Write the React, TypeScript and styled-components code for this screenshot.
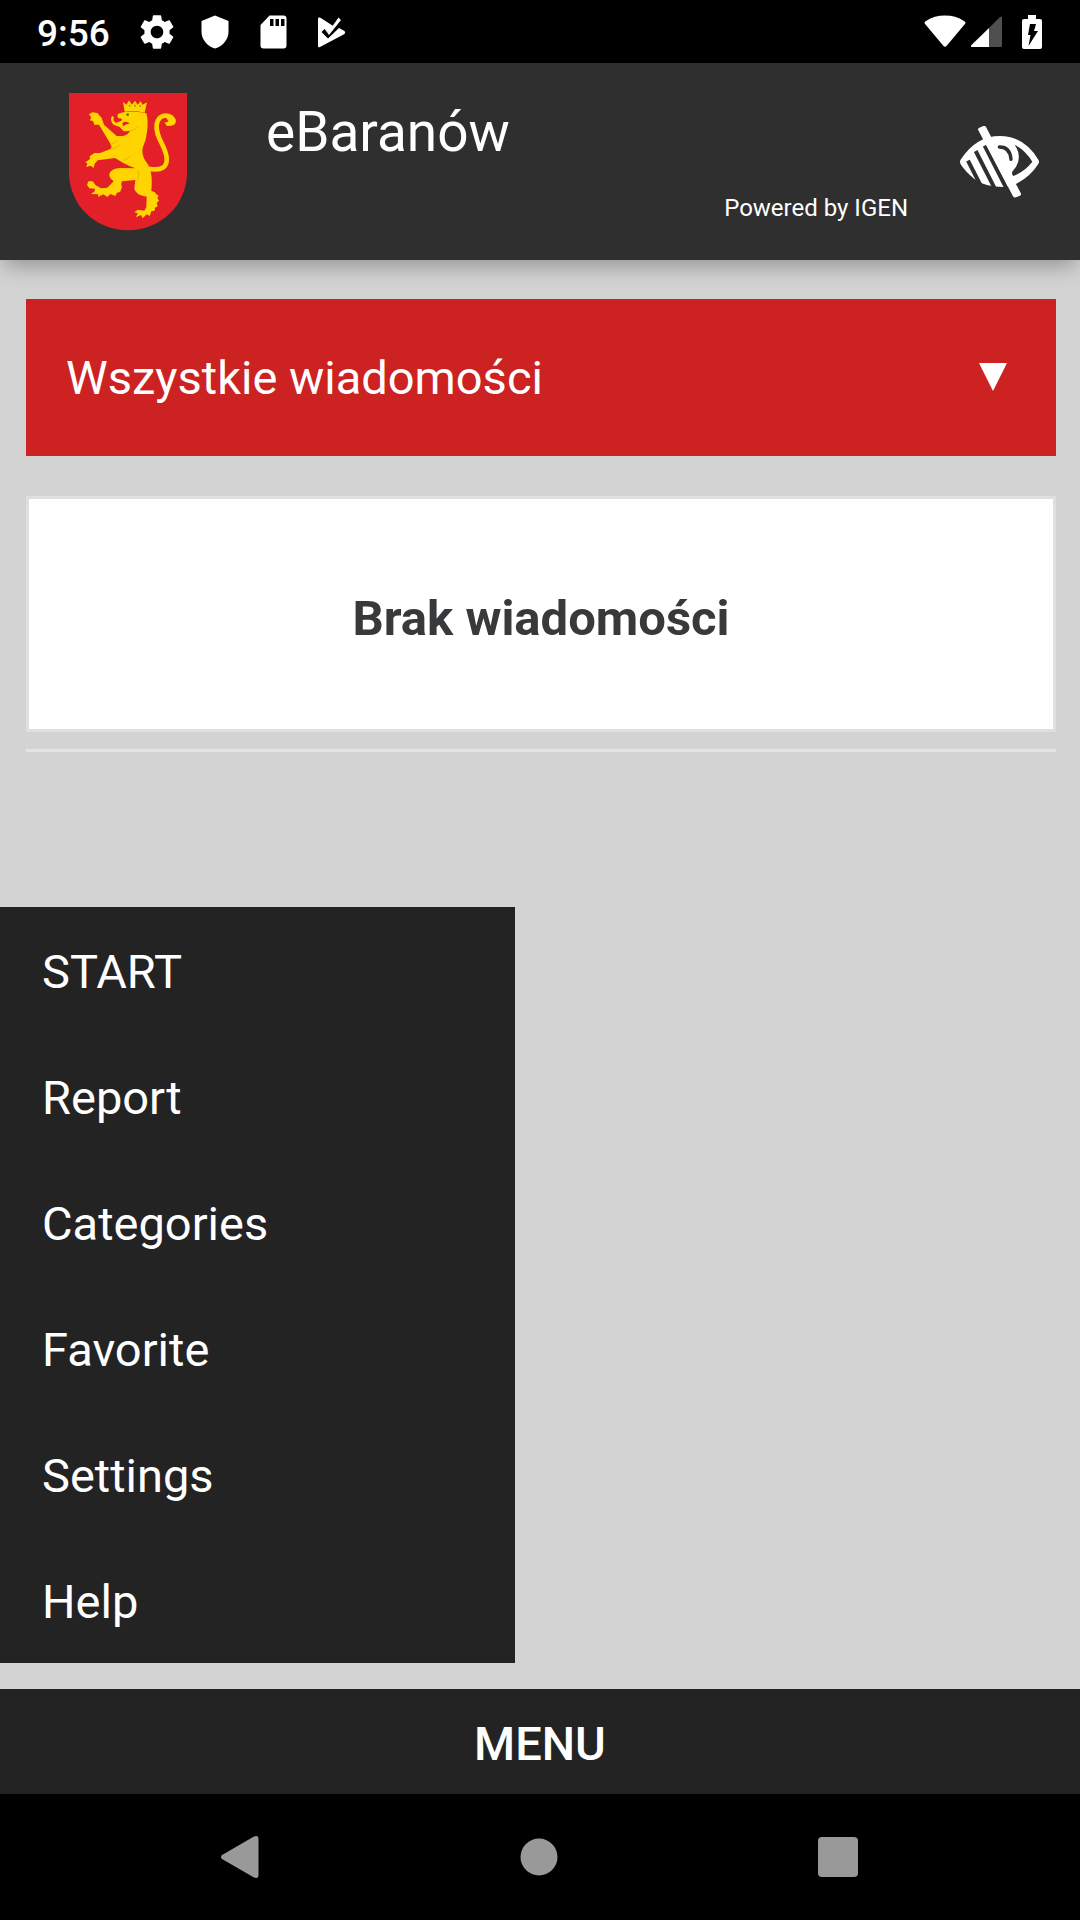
import React from "react";
import styled, { createGlobalStyle } from "styled-components";
import { MdSettings } from "react-icons/md";

const GlobalStyle = createGlobalStyle`
  * { box-sizing: border-box; }
  body {
    margin: 0;
    background: #d3d3d3;
    font-family: Roboto, "Noto Sans", sans-serif;
  }
  button, select { font-family: inherit; border: 0; padding: 0; cursor: pointer; }
`;

const Screen = styled.div`
  display: flex;
  flex-direction: column;
  min-height: 100vh;
`;

const StatusBar = styled.div`
  display: flex;
  align-items: center;
  justify-content: space-between;
  height: 63px;
  padding: 0 36px 0 37px;
  background: #000;
  color: #fff;
`;

const StatusIcons = styled.div<{ $gap: number }>`
  display: flex;
  align-items: center;
  gap: ${(p) => p.$gap}px;
`;

const Clock = styled.time`
  font-size: 37px;
  line-height: 44px;
  font-weight: 500;
  padding-top: 4px;
  margin-right: 10px;
`;

const BatterySlot = styled.span`
  display: flex;
  padding: 0 2px 0 14px;
`;

const Header = styled.header`
  position: relative;
  display: flex;
  align-items: center;
  height: 197px;
  padding: 0 40px 0 69px;
  background: #2f2f2f;
  color: #fff;
  box-shadow: 0 10px 20px -4px rgba(0, 0, 0, 0.3);
`;

const Brand = styled.div`
  flex: 1;
  display: flex;
  flex-direction: column;
  justify-content: space-between;
  height: 124px;
  padding: 0 52px 2px 79px;
`;

const Title = styled.h1`
  margin: 0;
  font-size: 55px;
  line-height: 64px;
  font-weight: 400;
`;

const Powered = styled.span`
  align-self: flex-end;
  font-size: 24px;
  line-height: 28px;
`;

const ContrastButton = styled.button`
  display: flex;
  background: none;
  color: #fff;
`;

const Main = styled.main`
  flex: 1;
  display: flex;
  flex-direction: column;
  padding: 39px 24px 26px 26px;
`;

const FilterBox = styled.div`
  display: grid;
  align-items: center;
  background: #cd2222;
  & > * { grid-area: 1 / 1; }
  & > svg { justify-self: end; margin: 0 49px 2px 0; pointer-events: none; }
`;

const FilterSelect = styled.select`
  appearance: none;
  width: 100%;
  height: 157px;
  padding: 0 100px 0 40px;
  background: transparent;
  color: #fff;
  font-size: 47px;
`;

const Card = styled.section`
  display: flex;
  align-items: center;
  justify-content: center;
  height: 236px;
  margin-top: 40px;
  padding-top: 10px;
  border: 3px solid #dfdfdf;
  background: #fff;
`;

const CardTitle = styled.h2`
  margin: 0;
  color: #37393b;
  font-size: 49px;
  line-height: 60px;
  font-weight: 700;
`;

const Divider = styled.hr`
  width: 100%;
  height: 3px;
  margin: 17px 0 0;
  border: 0;
  background: #e4e4e4;
`;

const Menu = styled.nav`
  display: flex;
  flex-direction: column;
  width: 50%;
  min-width: 515px;
  margin: auto 0 0 -26px;
  background: #232323;
`;

const MenuItem = styled.a`
  display: flex;
  align-items: center;
  height: 126px;
  padding: 4px 42px 0;
  color: #fff;
  font-size: 47px;
  line-height: 56px;
  text-decoration: none;
`;

const MenuButton = styled.button`
  height: 105px;
  padding-top: 4px;
  background: #232323;
  color: #fff;
  font-size: 47px;
  line-height: 56px;
  font-weight: 500;
`;

const SystemNav = styled.div`
  display: flex;
  justify-content: center;
  height: 126px;
  padding-right: 2px;
  background: #000;
`;

const SystemButton = styled.button`
  display: flex;
  align-items: center;
  justify-content: center;
  width: 299px;
  background: none;
`;

const items = ["START", "Report", "Categories", "Favorite", "Settings", "Help"];

const ShieldIcon = () => (
  <svg width="42" height="42" viewBox="0 0 42 42" fill="#fff">
    <path d="M21 4.5 34.5 10v10.500c0 8-5.500 14.500-13.500 17C13 35 7.500 28.500 7.500 20.500V10z" />
  </svg>
);

const SdIcon = () => (
  <svg width="42" height="42" viewBox="0 0 42 42" fill="#fff" fillRule="evenodd">
    <path d="M17.500 4.500H31.500a3 3 0 0 1 3 3V34.500a3 3 0 0 1-3 3H11.500a3 3 0 0 1-3-3V14zM18 8v7h3.500V8zM23.500 8v7H27V8zM29 8v7h3.500V8z" />
  </svg>
);

const PlayCheckIcon = () => (
  <svg width="42" height="42" viewBox="0 0 42 42" fill="#fff">
    <path d="M9 6.500Q8 6 8 8V35q0 2 2 1L34.500 23q1.500-1.500 0-3L29 17 18 27.500 11.500 21 14.500 18 18 21.500 24 15.500 10 6.500z" />
    <path d="m14.500 18 3.500 3.500L28.500 6.500 31 9 19 24z" />
  </svg>
);

const WifiIcon = () => (
  <svg width="42" height="34" viewBox="0 0 42 34" fill="#fff">
    <path d="M1.500 9.500C-.2 8 .5 7 2 6 7.500 2.200 14 .5 21 .5s13.500 1.700 19 5.500c1.500 1 2.200 2 .500 3.500L22.500 31q-1.500 1.500-3 0z" />
  </svg>
);

const SignalIcon = () => (
  <svg width="32" height="32" viewBox="0 0 32 32">
    <path d="M18 12 29 1q2-1.500 2 1V29.500q0 1.500-1.500 1.500H18z" fill="#4f4f4f" />
    <path d="M18 12V31H1.500Q-1 31 .5 29z" fill="#fff" />
  </svg>
);

const BatteryIcon = () => (
  <svg width="20" height="34" viewBox="0 0 20 34">
    <path d="M6 0h8v4h4q2 0 2 2V32q0 2-2 2H2q-2 0-2-2V6q0-2 2-2h4z" fill="#fff" />
    <path d="M8 9H14L12 16H16L6.500 31 8.500 20H6z" fill="#000" />
  </svg>
);

const LowVisionIcon = () => (
  <svg width="80" height="72" viewBox="90 75 240 216">
    <path d="M92 176Q138 105 210 105T325 176Q329 182 325 189 301 226 262 247L241 258H220Q165 258 133 234 107 213 92 190 88 182 92 176z" fill="#fff" />
    <path d="M254 131Q287 148 307 182 284 212 250 225 243 216 248 211 282 173 254 131z" fill="#2f2f2f" />
    <path d="M208 138Q240 137 243 175" fill="none" stroke="#2f2f2f" strokeWidth="10" strokeLinecap="round" />
    <g fill="none" stroke="#2f2f2f" strokeWidth="12">
      <path d="M114 179 151 252M137 150 194 262M164 134 232 267" />
    </g>
    <path d="M137 237 160 251 150 262 125 236z" fill="#2f2f2f" />
    <path d="M145 88Q142 83 148 80L160 75Q165 73 168 78L272 276Q275 281 270 284L258 289Q252 291 249 286z" fill="#fff" />
  </svg>
);

const Crest = () => (
  <svg width="118" height="138" viewBox="57 38 354 414" role="img" aria-label="Baranów coat of arms">
    <path d="M57 38H411V276C411 374 332 450 234 450S57 374 57 276z" fill="#e32028" />
    <g fill="#ffd400">
      <path d="M224 94 219 64 229 73 237 60 246 73 255 61 263 73 272 63 278 73 291 66 284 97Q254 89 224 94z" />
      <path d="M224 95Q257 91 289 99Q296 124 291 154Q289 178 279 199Q273 217 285 240Q301 260 303 278Q307 300 304 332L315 336Q317 343 326 346L322 353 327 361 320 368 323 378 315 382 314 391 304 393 299 407 290 402 278 414 273 404 258 411 263 399 253 395 264 388 283 391 289 380 290 349Q255 342 253 325L256 299 216 303Q211 311 216 321L210 335 201 337 196 347 181 341 172 350 160 342 144 350 145 342 123 341 134 333 135 325 118 324 111 314 115 303 128 303 137 315 153 324 172 322 191 303Q174 292 179 278Q186 264 210 263L256 264Q238 258 220 248L195 233 143 240 134 250 131 263 122 256 109 260 112 249 106 246 120 236 119 228 133 218 150 218 176 208Q190 205 180 188L147 133 133 133 129 122 119 120 124 112 117 102 127 96 142 98 155 113 162 133 200 167 219 167Q234 164 240 152L221 153 209 140 190 133Q178 119 186 107L192 110Q187 123 199 127L213 122Q222 115 205 114Q198 103 209 99z" />
    </g>
    <path d="M296 265Q353 276 350 233C347 195 315 170 320 133C325 103 350 101 367 113" fill="none" stroke="#ffd400" strokeWidth="14" />
    <path d="M348 112Q363 101 373 111Q382 121 374 132Q364 140 350 136L343 126Q352 128 355 121z" fill="#ffd400" />
    <path d="M217 128Q230 119 240 131Q231 128 225 135L219 137z" fill="#e32028" />
    <circle cx="233" cy="103" r="4" fill="#3b812c" />
    <g fill="none" stroke="#d8a900" strokeWidth="2">
      <path d="M240 151Q256 151 264 139M180 194Q192 188 203 180M180 209Q201 202 211 193M221 240Q235 235 242 225M263 299Q270 282 264 270" />
    </g>
    <g fill="#b98f1c">
      <circle cx="239" cy="76" r="3" /><circle cx="255" cy="76" r="3" /><circle cx="271" cy="77" r="3" />
    </g>
  </svg>
);

export default function App() {
  return (
    <Screen>
      <GlobalStyle />
      <StatusBar>
        <StatusIcons $gap={16}>
          <Clock>9:56</Clock>
          <MdSettings size={42} />
          <ShieldIcon />
          <SdIcon />
          <PlayCheckIcon />
        </StatusIcons>
        <StatusIcons $gap={5}>
          <WifiIcon />
          <SignalIcon />
          <BatterySlot><BatteryIcon /></BatterySlot>
        </StatusIcons>
      </StatusBar>
      <Header>
        <Crest />
        <Brand>
          <Title>eBaranów</Title>
          <Powered>Powered by IGEN</Powered>
        </Brand>
        <ContrastButton aria-label="High contrast"><LowVisionIcon /></ContrastButton>
      </Header>
      <Main>
        <FilterBox>
          <FilterSelect aria-label="Wszystkie wiadomości">
            <option>Wszystkie wiadomości</option>
          </FilterSelect>
          <svg width="28" height="28" viewBox="0 0 28 28"><path d="M0 0H28L14 28z" fill="#fff" /></svg>
        </FilterBox>
        <Card><CardTitle>Brak wiadomości</CardTitle></Card>
        <Divider />
        <Menu>
          {items.map((label) => (
            <MenuItem key={label} href={`#${label.toLowerCase()}`}>{label}</MenuItem>
          ))}
        </Menu>
      </Main>
      <MenuButton>MENU</MenuButton>
      <SystemNav>
        <SystemButton aria-label="Back">
          <svg width="38" height="42" viewBox="0 0 38 42" fill="#999"><path d="M1 19 33 .5Q37.500-1 37.500 3V39q0 4-4.500 2.500L1 23q-2-2 0-4z" /></svg>
        </SystemButton>
        <SystemButton aria-label="Home">
          <svg width="38" height="38" viewBox="0 0 38 38" fill="#999"><circle cx="19" cy="19" r="18.500" /></svg>
        </SystemButton>
        <SystemButton aria-label="Recent apps">
          <svg width="40" height="40" viewBox="0 0 40 40" fill="#999"><rect width="40" height="40" rx="4" /></svg>
        </SystemButton>
      </SystemNav>
    </Screen>
  );
}
